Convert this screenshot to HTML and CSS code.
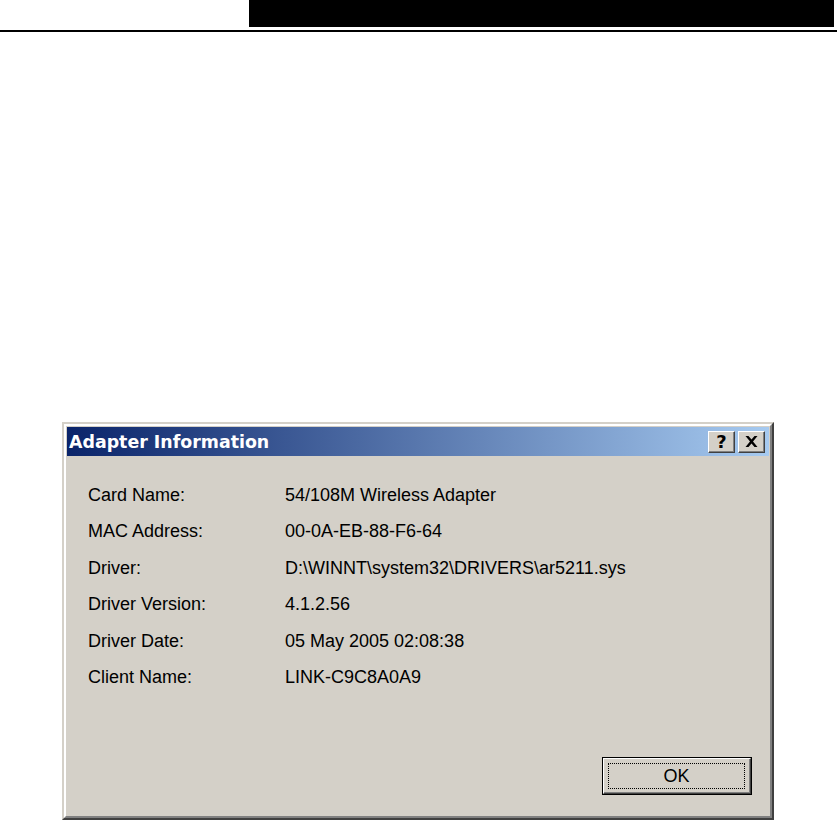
FILE: index.html
```html
<!DOCTYPE html>
<html>
<head>
<meta charset="utf-8">
<link rel="stylesheet" href="styles.css">
</head>
<body>
<header class="top"><div class="bar"></div></header>
<div class="rule"></div>
<div class="dialog">
  <div class="frame">
    <div class="titlebar">
      <span class="title">Adapter Information</span>
      <span class="tbtn help">?</span>
      <span class="tbtn close"><svg width="13" height="11" viewBox="0 0 13 11"><path d="M0.5 0h3l3 3.6L9.5 0h3L8 5.5 12.5 11h-3l-3-3.6-3 3.6h-3L5 5.5z" fill="#000"/></svg></span>
    </div>
    <div class="info">
      <span>Card Name:</span><span>54/108M Wireless Adapter</span>
      <span>MAC Address:</span><span>00-0A-EB-88-F6-64</span>
      <span>Driver:</span><span>D:\WINNT\system32\DRIVERS\ar5211.sys</span>
      <span>Driver Version:</span><span>4.1.2.56</span>
      <span>Driver Date:</span><span>05 May 2005 02:08:38</span>
      <span>Client Name:</span><span>LINK-C9C8A0A9</span>
    </div>
    <div class="footer">
      <button class="ok"><span class="bevel"><span class="focus">OK</span></span></button>
    </div>
  </div>
</div>
</body>
</html>
```
FILE: styles.css
```css
html, body { margin: 0; padding: 0; background: #fff; }
body { width: 837px; height: 820px; overflow: hidden; font-family: "Liberation Sans", Arial, sans-serif; }
.top { height: 27px; display: flex; }
.bar { margin-left: 249px; width: 585px; background: #000; }
.rule { margin-top: 3px; height: 2px; background: #000; }
.dialog {
  margin-top: 390px; margin-left: 62px; width: 712px; height: 398px; box-sizing: border-box;
  border: 2px solid; border-color: #d4d0c8 #404040 #404040 #d4d0c8; background: #d4d0c8;
}
.frame {
  height: 100%; box-sizing: border-box; border: 2px solid;
  border-color: #fff #808080 #808080 #fff; padding: 1px; display: flex; flex-direction: column;
}
.titlebar {
  height: 29px; display: flex; align-items: center; padding: 0 4px 0 2px; gap: 3px;
  background: linear-gradient(to right, #0a246a, #a6caf0);
}
.title { flex: 1; color: #fff; font-family: "DejaVu Sans", Verdana, sans-serif; font-weight: bold; font-size: 17.4px; }
.tbtn {
  width: 27px; height: 22px; box-sizing: border-box; background: #d4d0c8;
  border: 1px solid; border-color: #fff #404040 #404040 #fff;
  box-shadow: inset -1px -1px 0 #808080;
  display: flex; align-items: center; justify-content: center;
  font-family: "DejaVu Sans", Verdana, sans-serif; font-weight: bold; font-size: 18px; line-height: 1; color: #000;
}
.close svg { margin-left: -1px; }
.info {
  padding: 21px 0 0 21px; display: grid; grid-template-columns: 197px auto;
  grid-auto-rows: 36.5px; align-items: center; font-size: 18px; color: #000;
}
.footer { margin-top: auto; display: flex; justify-content: flex-end; padding: 0 17px 20px 0; }
.ok {
  width: 150px; height: 38px; padding: 0; margin: 0; box-sizing: border-box;
  border: 1px solid #000; background: #d4d0c8; display: flex; cursor: default;
}
.bevel {
  flex: 1; box-sizing: border-box; border: 1px solid; border-color: #fff #404040 #404040 #fff;
  box-shadow: inset -1px -1px 0 #808080; padding: 4px 5px 4px 4px; display: flex;
}
.focus {
  flex: 1; border: 1px dotted #000; display: flex; align-items: center; justify-content: center;
  font-family: "Liberation Sans", Arial, sans-serif; font-size: 18px; color: #000;
}
```
